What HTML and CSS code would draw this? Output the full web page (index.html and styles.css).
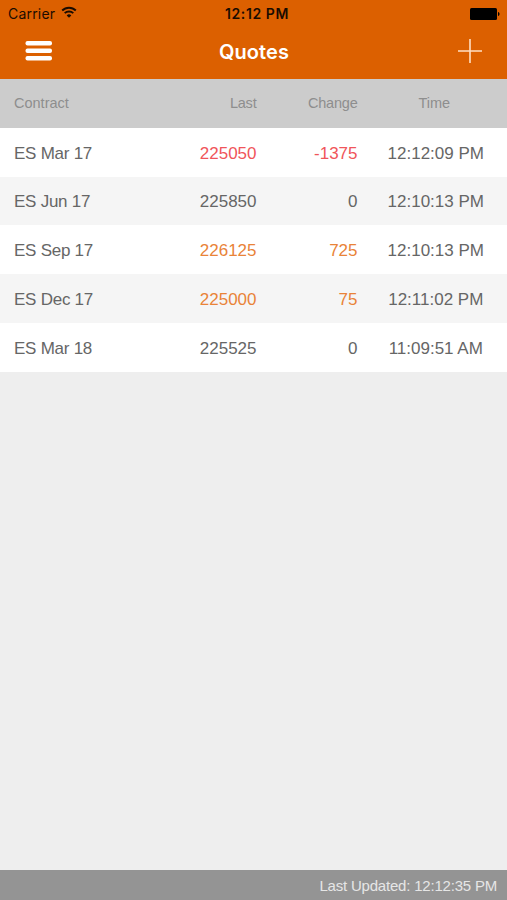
FILE: index.html
```html
<!DOCTYPE html>
<html lang="en">
<head>
  <meta charset="UTF-8">
  <meta name="viewport" content="width=device-width, initial-scale=1.0">
  <title>Quotes</title>
  <link rel="stylesheet" href="styles.css">
</head>
<body>
  <header>
    <div class="status">
      <div class="carrier">
        <span>Carrier</span>
        <svg class="wifi" width="16" height="12" viewBox="0 0 16 12" fill="none" stroke="#1a0c00" stroke-width="1.9">
          <path d="M1.200 4.500a9.600 9.600 0 0 1 13.600 0"/>
          <path d="M3.700 7.200a6.100 6.100 0 0 1 8.600 0"/>
          <path d="M8 11.800L5.700 9.400a3.200 3.200 0 0 1 4.600 0z" fill="#1a0c00" stroke="none"/>
        </svg>
      </div>
      <span class="clock">12:12 PM</span>
      <svg class="battery" width="30" height="12" viewBox="0 0 30 12">
        <rect width="27" height="12" rx="1.5"/>
        <path d="M28 4c2 .3 2 3.700 0 4z"/>
      </svg>
    </div>
    <nav class="navbar">
      <button class="menu" aria-label="Menu">
        <svg width="27" height="20" viewBox="0 0 27 20" fill="#fff">
          <rect x=".5" width="26.500" height="4.600" rx="2"/>
          <rect x=".5" y="7.500" width="26.500" height="4.600" rx="2"/>
          <rect x=".5" y="15" width="26.500" height="4.600" rx="2"/>
        </svg>
      </button>
      <h1>Quotes</h1>
      <button class="add" aria-label="Add">
        <svg width="24" height="24" viewBox="0 0 24 24" stroke="#ffdfc4" stroke-width="1.600">
          <path d="M12 0v24M0 12h24"/>
        </svg>
      </button>
    </nav>
  </header>

  <main class="quotes">
    <div class="row head">
      <span>Contract</span><span class="num">Last</span><span class="num">Change</span><span class="time">Time</span>
    </div>
    <div class="row down">
      <span class="name">ES Mar 17</span><span class="num">225050</span><span class="num">-1375</span><span class="time">12:12:09 PM</span>
    </div>
    <div class="row alt">
      <span class="name">ES Jun 17</span><span class="num">225850</span><span class="num">0</span><span class="time">12:10:13 PM</span>
    </div>
    <div class="row up">
      <span class="name">ES Sep 17</span><span class="num">226125</span><span class="num">725</span><span class="time">12:10:13 PM</span>
    </div>
    <div class="row alt up">
      <span class="name">ES Dec 17</span><span class="num">225000</span><span class="num">75</span><span class="time">12:11:02 PM</span>
    </div>
    <div class="row">
      <span class="name">ES Mar 18</span><span class="num">225525</span><span class="num">0</span><span class="time">11:09:51 AM</span>
    </div>
  </main>

  <footer>Last Updated: 12:12:35 PM</footer>
</body>
</html>
```

FILE: styles.css
```css
* {
  box-sizing: border-box;
}
body {
  margin: 0;
  height: 100vh;
  display: flex;
  flex-direction: column;
  background: #eeeeee;
  font-family: "Liberation Sans", Arial, sans-serif;
  color: #666;
}
header {
  height: 79px;
  background: #dc6000;
  font-family: Inter, sans-serif;
}
.status {
  display: grid;
  grid-template-columns: 1fr auto 1fr;
  align-items: center;
  height: 27px;
  padding: 0 7px 0 8px;
  font-size: 14px;
  color: #1a0c00;
}
.carrier {
  display: flex;
  align-items: center;
  gap: 6px;
  letter-spacing: 0.2px;
}
.wifi {
  margin-bottom: 3px;
}
.clock {
  font-weight: 600;
  letter-spacing: 0.6px;
  margin-left: 6px;
}
.battery {
  justify-self: end;
  fill: #000;
}
.navbar {
  display: grid;
  grid-template-columns: 1fr auto 1fr;
  align-items: center;
  height: 48px;
  padding: 0 25px;
}
.navbar button {
  display: flex;
  padding: 0;
  border: none;
  background: none;
  cursor: pointer;
}
.navbar .add {
  justify-self: end;
}
h1 {
  margin: 2px 0 0 1px;
  font-size: 20px;
  font-weight: 600;
  letter-spacing: 0.1px;
  color: #fff;
}
.quotes {
  flex: 1;
}
.row {
  display: grid;
  grid-template-columns: 142.500px 100px 101px 1fr;
  align-items: center;
  height: 48.8px;
  padding: 3px 9px 0 14px;
  background: #fff;
  font-size: 17px;
}
.row.alt {
  background: #f5f5f5;
}
.row.head {
  background: #cccccc;
  font-size: 14.5px;
  padding-top: 0;
  color: #8e8e8e;
}
.name {
  letter-spacing: -0.25px;
}
.num {
  text-align: right;
}
.head .num {
  letter-spacing: -0.2px;
}
.time {
  text-align: center;
  padding-left: 16px;
}
.head .time {
  padding-left: 13px;
}
.down .num {
  color: #f0555a;
}
.up .num {
  color: #e98338;
}
footer {
  height: 30px;
  padding-right: 10px;
  background: #949494;
  font-size: 15px;
  letter-spacing: -0.2px;
  line-height: 32px;
  text-align: right;
  color: #e6e6e6;
}
```
